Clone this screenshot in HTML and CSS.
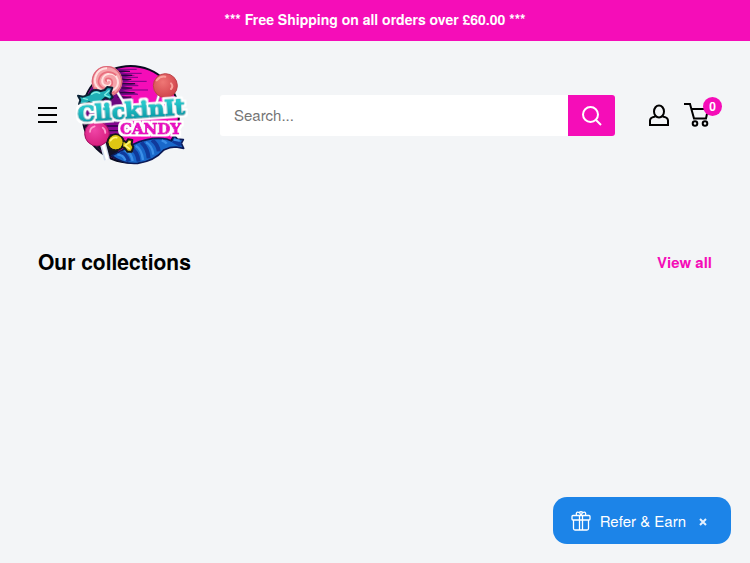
FILE: index.html
```html
<!DOCTYPE html>
<html lang="en">
<head>
<meta charset="utf-8">
<meta name="viewport" content="width=device-width, initial-scale=1">
<title>ClickinIt Candy</title>
<link rel="stylesheet" href="styles.css">
</head>
<body>
<div class="announcement">*** Free Shipping on all orders over £60.00 ***</div>

<header class="header">
  <button type="button" aria-label="Menu">
    <svg width="20" height="16" viewBox="0 0 20 16"><path d="M0 1h19M0 8h19M0 15h19" stroke="#000" stroke-width="2"/></svg>
  </button>

  <a class="logo" href="#" aria-label="ClickinIt Candy">
    <svg width="112" height="102" viewBox="18 27 336 306">
      <defs>
        <clipPath id="disc"><circle cx="182" cy="178" r="142"/></clipPath>
        <linearGradient id="teal" x1="0" y1="0" x2="0" y2="1"><stop offset=".3" stop-color="#25c6ca"/><stop offset=".8" stop-color="#0b9ba8"/></linearGradient>
        <radialGradient id="red" cx=".4" cy=".35" r=".7"><stop offset="0" stop-color="#ef7775"/><stop offset="1" stop-color="#cf4149"/></radialGradient>
        <radialGradient id="pink" cx=".4" cy=".35" r=".7"><stop offset="0" stop-color="#f045a7"/><stop offset="1" stop-color="#d51b7b"/></radialGradient>
        <filter id="halo" x="-10%" y="-20%" width="120%" height="140%">
          <feMorphology in="SourceAlpha" operator="dilate" radius="6" result="spread"/>
          <feFlood flood-color="#fff"/>
          <feComposite in2="spread" operator="in" result="white"/>
          <feMerge><feMergeNode in="white"/><feMergeNode in="SourceGraphic"/></feMerge>
        </filter>
      </defs>
      <circle cx="182" cy="178" r="148" fill="#080b20"/>
      <circle cx="182" cy="178" r="142" fill="#f50db8"/>
      <g clip-path="url(#disc)">
        <path d="M40 30H165L145 43 180 48 150 55 196 61 155 68 184 74 158 82 205 87 160 93 187 100 158 107 204 115 150 122 190 130 120 250H40Z" fill="#6c087f"/>
        <path d="M145 43H200M150 55H215M154 67H204M156 79H230M158 92H205M155 105H234M145 118H204M142 130H184" stroke="#760486" stroke-width="3"/>
        <path d="M145 49H180M150 61H186M154 73H184M156 86H195M155 99H187M150 113H194M142 126H184" stroke="#200634" stroke-width="3"/>
        <path d="M100 205H220L170 212 205 219 148 226 210 234 120 244 170 252H100Z" fill="#8b0795"/>
        <path d="M104 213H160M106 227H148M110 240H150" stroke="#2a0647" stroke-width="4"/>
        <path d="M40 180V320H170L112 250Z" fill="#101127"/>
      </g>
      <path d="M138 105 170 156M267 120 253 164" stroke="#bcaec9" stroke-width="9"/>
      <path d="M138 105 170 156M267 120 253 164" stroke="#fff" stroke-width="5"/>
      <circle cx="111" cy="79" r="46" fill="#f4a3a9"/>
      <circle cx="111" cy="79" r="44" fill="none" stroke="#dc6879" stroke-width="4"/>
      <path d="M111 79c4-10 18-3 12 7-8 13-29 5-26-11 3-24 39-25 46-1 7 29-30 47-55 28-27-23-9-62 23-62" fill="none" stroke="#ffe1df" stroke-width="6"/>
      <path d="M111 79c-6 0-5-9 2-9 15-1 18 17 8 25-20 15-42-5-33-26 9-21 36-23 51-8M77 98c10 22 37 27 57 12" fill="none" stroke="#e96f7e" stroke-width="5"/>
      <circle cx="286" cy="92" r="36" fill="url(#red)" stroke="#bd4247" stroke-width="3"/>
      <path d="M260 76q12-14 26-11M303 85q8 8 0 17" fill="none" stroke="#f9a39c" stroke-width="6" stroke-linecap="round"/>
      <path d="M57 119 40 125 24 122 31 135 27 148 44 148 57 142Q72 152 94 139L106 128 119 135 128 127 121 115 127 98 112 96 104 105 92 108Q68 98 57 119Z" fill="#20afb6" stroke="#092236" stroke-width="6" stroke-linejoin="round"/>
      <path d="M65 118q12-11 24-3M104 119l13-12M105 121l13 5M40 130l12 3" fill="none" stroke="#80eee5" stroke-width="4" stroke-linecap="round"/>
      <path d="M96 256 111 314" stroke="#d3dcef" stroke-width="18"/>
      <path d="M98 263 112 314" stroke="#fff" stroke-width="9"/>
      <circle cx="81" cy="236" r="37" fill="url(#pink)" stroke="#9c1261" stroke-width="3"/>
      <path d="M60 231q0-13 14-17M98 218q9 7 8 16" fill="none" stroke="#ff9ed0" stroke-width="5" stroke-linecap="round"/>
      <path d="M125 302Q157 286 190 268 239 245 290 252L305 258 313 242 322 252 340 254 334 265 341 280 318 276 299 278 281 285Q254 318 203 325 160 329 125 302Z" fill="#1968ca" stroke="#0b1a57" stroke-width="5" stroke-linejoin="round"/>
      <path d="M151 293q18 3 25 27M179 277q24 12 27 43M214 262q20 19 22 48M246 255q19 15 20 34M309 257l24 13" fill="none" stroke="#103a9b" stroke-width="12"/>
      <path d="M142 299q18 0 24 17M166 286q18 8 22 32M197 272q18 10 22 43M228 262q19 10 22 37M275 256q11 3 15 10M311 254l18 3" fill="none" stroke="#3b8fe8" stroke-width="7"/>
      <circle cx="137" cy="262" r="24" fill="#dec713" stroke="#171a19" stroke-width="6"/>
      <path d="M158 255 169 262 174 253 187 255 185 267 190 276 185 290 172 290 164 279 156 276Z" fill="#dec713" stroke="#171a19" stroke-width="6" stroke-linejoin="round"/>
      <circle cx="137" cy="262" r="21" fill="#dec713"/>
      <path d="M121 257q8-12 19-9M165 271l14-10M167 273l11 8" fill="none" stroke="#fff478" stroke-width="5" stroke-linecap="round"/>
      <text class="logo-sub" x="150" y="237">CANDY</text>
      <text class="logo-name" x="24" y="202" transform="rotate(-4 24 202)">ClickinIt</text>
    </svg>
  </a>

  <form class="search" role="search">
    <input class="search-input" type="search" placeholder="Search..." aria-label="Search">
    <button class="search-button" type="submit" aria-label="Submit search">
      <svg width="20" height="20" viewBox="0 0 20 20" fill="none" stroke="#fff" stroke-width="2"><circle cx="8.500" cy="8.500" r="7.500"/><path d="m14 14 5 5"/></svg>
    </button>
  </form>

  <nav class="actions" aria-label="Account and cart">
    <a href="#" aria-label="Account">
      <svg width="20" height="22" viewBox="0 0 20 22" fill="none" stroke="#000" stroke-width="2"><ellipse cx="10" cy="7.500" rx="5" ry="6"/><path d="M6.500 12.500C3 13 1 14 1 16.500V21h18v-4.500c0-2.500-2-3.500-5.500-4"/></svg>
    </a>
    <a class="cart" href="#" aria-label="Cart, 0 items">
      <svg width="27" height="24" viewBox="0 0 27 24" fill="none" stroke="#000" stroke-width="2"><path d="M0 1h6l4 14.500h12L24 6H7.500"/><circle cx="11" cy="20.500" r="2.300"/><circle cx="21" cy="20.500" r="2.300"/></svg>
      <span class="badge">0</span>
    </a>
  </nav>
</header>

<main class="collections">
  <h1>Our collections</h1>
  <a class="view-all" href="#">View all</a>
</main>

<aside class="refer">
  <button class="refer-open" type="button">
    <svg width="20" height="20" viewBox="0 0 20 20" fill="none" stroke="#fff" stroke-width="1.300"><rect x="1" y="4.500" width="18" height="4.500" rx="1"/><path d="M2.500 9v8.500q0 1.500 1.500 1.500h12q1.500 0 1.500-1.500V9M8.500 4.500V19M11.500 4.500V19M10 4C8 0 4.500.5 5.500 4M10 4c2-4 5.500-3.500 4.500 0M8 1.500Q10 0 12 1.500"/></svg>
    Refer &amp; Earn
  </button>
  <button class="refer-close" type="button" aria-label="Close">
    <svg width="8" height="8" viewBox="0 0 8 8"><path d="m1 1 6 6M7 1 1 7" stroke="#e4f1ff" stroke-width="2"/></svg>
  </button>
</aside>
</body>
</html>
```
FILE: styles.css
```css
* {
  box-sizing: border-box;
}

body {
  margin: 0;
  background: #f3f5f7;
  color: #000;
  font: 15px/24px "Nimbus Sans", "TeX Gyre Heros", "FreeSans", Helvetica, "Liberation Sans", sans-serif;
}

svg {
  display: block;
}

a {
  color: inherit;
  text-decoration: none;
}

button {
  border: 0;
  padding: 0;
  background: none;
  color: inherit;
  font: inherit;
  cursor: pointer;
}

.announcement {
  padding: 7px 38px 10px;
  background: #f50db8;
  color: #fff;
  font-size: 14px;
  font-weight: bold;
  text-align: center;
}

.header {
  display: flex;
  align-items: center;
  padding: 23px 38px;
}

.logo {
  margin: 0 32px 0 18px;
}

.logo-name,
.logo-sub {
  font-family: "DejaVu Serif", serif;
  font-weight: bold;
  filter: url(#halo);
  stroke-linejoin: round;
}

.logo-name {
  fill: url(#teal);
  stroke: url(#teal);
  font-size: 66px;
  stroke-width: 5px;
}

.logo-sub {
  fill: #e80fc2;
  stroke: #e80fc2;
  font-size: 45px;
  stroke-width: 3px;
}

.search {
  display: flex;
  flex: 1;
  min-width: 0;
  height: 41px;
}

.search-input {
  flex: 1;
  min-width: 0;
  padding: 0 14px;
  border: 0;
  border-radius: 3px 0 0 3px;
  background: #fff;
  color: #000;
  font: inherit;
  appearance: none;
}

.search-input::placeholder {
  color: #757575;
}

.search-button {
  display: grid;
  place-items: center;
  width: 47px;
  padding-top: 2px;
  border-radius: 0 3px 3px 0;
  background: #f50db8;
}

.actions {
  display: flex;
  align-items: center;
  gap: 15px;
  margin-left: 34px;
  padding-right: 1px;
}

.cart {
  position: relative;
}

.badge {
  position: absolute;
  top: -6px;
  right: -11px;
  width: 19px;
  height: 19px;
  border-radius: 50%;
  background: #f50db8;
  color: #fff;
  font-size: 12px;
  font-weight: bold;
  line-height: 19px;
  text-align: center;
}

.collections {
  display: flex;
  align-items: center;
  justify-content: space-between;
  padding: 59px 38px;
}

h1 {
  margin: 0;
  font-size: 21px;
  line-height: 24px;
}

.view-all {
  padding-top: 2px;
  color: #f50db8;
  font-weight: bold;
}

.refer {
  position: fixed;
  right: 19px;
  bottom: 19px;
  display: flex;
  align-items: center;
  gap: 13px;
  padding: 0 24px 0 18px;
  border-radius: 14px;
  background: #1c84e8;
  color: #fff;
}

.refer-open {
  display: flex;
  align-items: center;
  gap: 9px;
  height: 47px;
}

.refer-close {
  padding-top: 3px;
}
```
